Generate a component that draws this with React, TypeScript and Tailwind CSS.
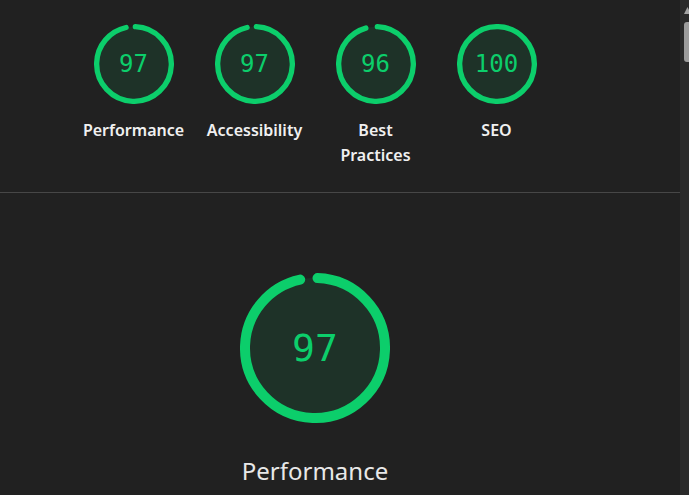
const GREEN = '#0cce6b';

function Gauge({ score, size, fontSize }: { score: number; size: number; fontSize: string }) {
  const r = 56;
  const sw = 8;
  const circ = 2 * Math.PI * r;
  const rot = -90 + ((0.25 * sw) / circ) * 360;
  const arc = score === 100 ? circ : (score / 100) * circ - sw / 2;

  return (
    <div className="grid place-items-center" style={{ width: size, height: size }}>
      <svg viewBox="0 0 120 120" width={size} height={size} className="col-start-1 row-start-1">
        <circle cx="60" cy="60" r={r} fill="rgba(12,206,107,0.1)" />
        <circle
          cx="60"
          cy="60"
          r={r}
          fill="none"
          stroke={GREEN}
          strokeWidth={sw}
          strokeLinecap="round"
          strokeDasharray={`${arc} ${circ}`}
          transform={`rotate(${rot} 60 60)`}
        />
      </svg>
      <span
        className={`col-start-1 row-start-1 text-[#0cce6b] font-['DejaVu_Sans_Mono',monospace] ${fontSize}`}
      >
        {score}
      </span>
    </div>
  );
}

const CATEGORIES = [
  { label: ['Performance'], score: 97 },
  { label: ['Accessibility'], score: 97 },
  { label: ['Best', 'Practices'], score: 96 },
  { label: ['SEO'], score: 100 },
];

export default function App() {
  return (
    <div className="flex h-[495px] w-[689px] overflow-hidden bg-[#212121] font-['Noto_Sans',sans-serif]">
      {/* Report */}
      <div className="flex w-[680px] flex-col">
        <div className="h-[193px] border-b border-[#474747]">
          <div className="flex w-[630px] justify-center gap-[17px] pt-[24px]">
            {CATEGORIES.map((c) => (
              <div key={c.score + c.label[0]} className="flex w-[104px] flex-col items-center">
                <Gauge score={c.score} size={80} fontSize="text-[24px]" />
                <div className="mt-[14px] text-center text-[16px] leading-[25px] font-semibold whitespace-nowrap text-[#f0f0f0]">
                  {c.label.map((l) => (
                    <div key={l}>{l}</div>
                  ))}
                </div>
              </div>
            ))}
          </div>
        </div>

        <div className="flex w-[630px] flex-col items-center pt-[80px]">
          <Gauge score={97} size={150} fontSize="text-[38px]" />
          <div className="mt-[31px] text-[24px] leading-[34px] text-[#e8e8e8]">Performance</div>
        </div>
      </div>

      {/* Scrollbar */}
      <div className="w-[9px] overflow-hidden bg-[#2b2b2b]">
        <div className="flex w-[15px] flex-col pl-[4px] pt-[7px]">
          <svg width="7" height="7" viewBox="0 0 7 7">
            <path d="M0 7 L3.5 0 L7 7 Z" fill="#a3a3a3" />
          </svg>
          <div className="mt-[8px] h-[40px] w-[7px] rounded-[3px] bg-[#9e9e9e]" />
        </div>
      </div>
    </div>
  );
}
